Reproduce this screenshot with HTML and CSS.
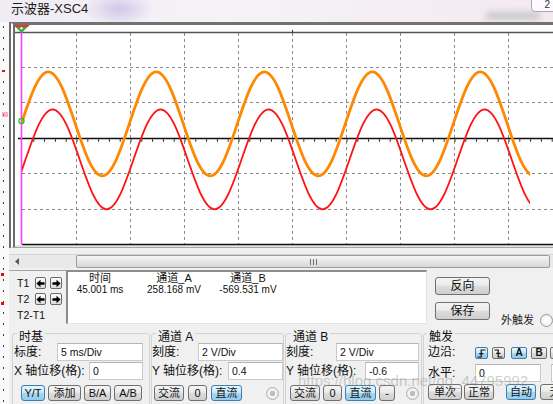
FILE: index.html
```html
<!DOCTYPE html>
<html lang="zh">
<head>
<meta charset="utf-8">
<title>示波器-XSC4</title>
<link rel="stylesheet" href="styles.css">
</head>
<body>
<header class="titlebar">
  <span class="glass"></span>
  <span class="blob"></span>
  <span class="title">示波器-XSC4</span>
  <span class="behind">2</span>
</header>
<div class="main">
  <div class="desk"></div>
  <div class="window">
    <div class="scope">
      <svg class="plot" width="538" height="222" viewBox="15 25 538 222" xmlns="http://www.w3.org/2000/svg">
        <defs><clipPath id="clipw"><rect x="22" y="25" width="508" height="222"/></clipPath></defs>
        <rect x="15" y="25" width="538" height="222" fill="#fff"/>
        <rect x="15" y="245.2" width="538" height="2" fill="#e2e2e2"/>
        <g stroke="#8a8a8a" stroke-width="1" stroke-dasharray="3 3" fill="none">
          <path d="M76.5 33V244M130.5 33V244M184.5 33V244M238.5 33V244M292.5 33V244M346.5 33V244M400.5 33V244M454.5 33V244M508.5 33V244"/>
          <path d="M22 67.5H553M22 102.5H553M22 173.5H553M22 209.5H553"/>
        </g>
        <path d="M15 32.5H553" stroke="#555" stroke-width="1.5"/>
        <path d="M292.5 30V33" stroke="#333" stroke-width="1"/>
        <path d="M22 244.5H553" stroke="#111" stroke-width="1.5"/>
        <path d="M18 138.5H553" stroke="#111" stroke-width="1.3"/>
        <path d="M33.3 140.5H553" stroke="#222" stroke-width="2.5" stroke-dasharray="1 9.8"/>
        <path d="M21.5 26V244.5" stroke="#ff3cff" stroke-width="1.6"/>
        <g clip-path="url(#clipw)" fill="none" stroke-linejoin="round">
          <path stroke="#ff8800" stroke-width="2.8" d="M21.3 123.9
            c8.81,-26.6 17.23,-52 27,-52 c9.77,0 18.19,25.4 27,52 c8.81,26.6 17.23,52 27,52 c9.77,0 18.19,-25.4 27,-52
            c8.81,-26.6 17.23,-52 27,-52 c9.77,0 18.19,25.4 27,52 c8.81,26.6 17.23,52 27,52 c9.77,0 18.19,-25.4 27,-52
            c8.81,-26.6 17.23,-52 27,-52 c9.77,0 18.19,25.4 27,52 c8.81,26.6 17.23,52 27,52 c9.77,0 18.19,-25.4 27,-52
            c8.81,-26.6 17.23,-52 27,-52 c9.77,0 18.19,25.4 27,52 c8.81,26.6 17.23,52 27,52 c9.77,0 18.19,-25.4 27,-52
            c8.81,-26.6 17.23,-52 27,-52 c9.77,0 18.19,25.4 27,52 c8.81,26.6 17.23,52 27,52 c9.77,0 18.19,-25.4 27,-52"/>
          <path stroke="#ff1212" stroke-width="1.8" d="M-1.4 209.3
            c9.77,0 18.19,-24.4 27,-50 c8.81,-25.6 17.23,-50 27,-50 c9.77,0 18.19,24.4 27,50 c8.81,25.6 17.23,50 27,50
            c9.77,0 18.19,-24.4 27,-50 c8.81,-25.6 17.23,-50 27,-50 c9.77,0 18.19,24.4 27,50 c8.81,25.6 17.23,50 27,50
            c9.77,0 18.19,-24.4 27,-50 c8.81,-25.6 17.23,-50 27,-50 c9.77,0 18.19,24.4 27,50 c8.81,25.6 17.23,50 27,50
            c9.77,0 18.19,-24.4 27,-50 c8.81,-25.6 17.23,-50 27,-50 c9.77,0 18.19,24.4 27,50 c8.81,25.6 17.23,50 27,50
            c9.77,0 18.19,-24.4 27,-50 c8.81,-25.6 17.23,-50 27,-50 c9.77,0 18.19,24.4 27,50 c8.81,25.6 17.23,50 27,50"/>
        </g>
        <circle cx="21.5" cy="121" r="2.6" fill="none" stroke="#19c819" stroke-width="1.2"/>
        <polygon points="13.5,25 29.5,25 21.5,33" fill="#22bb22"/>
        <polygon points="13.5,25 29.5,25 27.7,27 15.3,27" fill="#ff2a2a"/>
        <circle cx="21.5" cy="28.3" r="1.6" fill="#fff" stroke="#777" stroke-width=".8"/>
      </svg>
    </div>
    <div class="hscroll">
      <span class="sb-arrow"><svg width="4" height="7" viewBox="0 0 4 7"><path d="M4 0V7L0 3.5Z" fill="#5a5a5a"/></svg></span>
      <span class="sb-track"></span>
      <span class="sb-thumb"><span class="grip"></span></span>
    </div>
    <div class="readout">
      <div class="cursors">
        <div class="crow"><span class="clab">T1</span>
          <span class="abtn"><svg width="9" height="9" viewBox="0 0 10 10"><path d="M0.5 5L5 0.8V3.5H9.5V6.5H5V9.2Z"/></svg></span>
          <span class="abtn"><svg width="9" height="9" viewBox="0 0 10 10"><path d="M9.5 5L5 0.8V3.5H0.5V6.5H5V9.2Z"/></svg></span>
        </div>
        <div class="crow"><span class="clab">T2</span>
          <span class="abtn"><svg width="9" height="9" viewBox="0 0 10 10"><path d="M0.5 5L5 0.8V3.5H9.5V6.5H5V9.2Z"/></svg></span>
          <span class="abtn"><svg width="9" height="9" viewBox="0 0 10 10"><path d="M9.5 5L5 0.8V3.5H0.5V6.5H5V9.2Z"/></svg></span>
        </div>
        <div class="crow diff">T2-T1</div>
      </div>
      <div class="table">
        <div class="th">时间</div><div class="th">通道_A</div><div class="th">通道_B</div>
        <div class="td">45.001 ms</div><div class="td">258.168 mV</div><div class="td">-569.531 mV</div>
      </div>
      <div class="side">
        <button class="btn big">反向</button>
        <button class="btn big">保存</button>
      </div>
      <div class="ext">外触发<span class="radio"></span></div>
    </div>
    <div class="controls">
      <section class="group g1">
        <div class="legend"><span>时基</span></div>
        <div class="row row1"><span class="lab">标度:</span><span class="field w86">5 ms/Div</span></div>
        <div class="row row2"><span class="lab">X 轴位移(格):</span><span class="field w54">0</span></div>
        <div class="brow">
          <button class="btn on w24">Y/T</button>
          <button class="btn w33">添加</button>
          <button class="btn w27">B/A</button>
          <button class="btn w28">A/B</button>
        </div>
      </section>
      <section class="group g2">
        <div class="legend"><span>通道 A</span></div>
        <div class="row row1"><span class="lab">刻度:</span><span class="field w85">2 V/Div</span></div>
        <div class="row row2"><span class="lab">Y 轴位移(格):</span><span class="field w55">0.4</span></div>
        <div class="brow">
          <button class="btn w30">交流</button>
          <button class="btn w19">0</button>
          <button class="btn on w31">直流</button>
          <span class="radio dis"></span>
        </div>
      </section>
      <section class="group g3">
        <div class="legend"><span>通道 B</span></div>
        <div class="row row1"><span class="lab">刻度:</span><span class="field w83">2 V/Div</span></div>
        <div class="row row2"><span class="lab">Y 轴位移(格):</span><span class="field w54">-0.6</span></div>
        <div class="brow">
          <button class="btn w30">交流</button>
          <button class="btn w19">0</button>
          <button class="btn on w31">直流</button>
          <button class="btn w16">-</button>
          <span class="radio dis"></span>
        </div>
      </section>
      <section class="group g4">
        <div class="legend"><span>触发</span></div>
        <div class="row row1"><span class="lab lw">边沿:</span>
          <button class="btn ebtn on w13"><svg width="9" height="9" viewBox="0 0 9 9"><path d="M0.5 8H4.2V1H8.5M2.2 4.6H6.4" fill="none" stroke="#111" stroke-width="1.2"/></svg></button>
          <button class="btn ebtn w13 m4"><svg width="9" height="9" viewBox="0 0 9 9"><path d="M0.5 1H4.2V8H8.5M2.2 4.4H6.4" fill="none" stroke="#111" stroke-width="1.2"/></svg></button>
          <button class="btn ebtn on w16 m6">A</button>
          <button class="btn ebtn w16 m4">B</button>
          <button class="btn ebtn w16 m3">C</button>
        </div>
        <div class="row row2 r4"><span class="lab lw">水平:</span><span class="field w66">0</span><span class="field w40 m10">V</span></div>
        <div class="brow">
          <button class="btn w34">单次</button>
          <button class="btn w30 m2">正常</button>
          <button class="btn on w30 m12">自动</button>
          <button class="btn w30 m4">无</button>
        </div>
      </section>
    </div>
  </div>
</div>
<div class="watermark">https://blog.csdn.net/qq_44795992</div>
</body>
</html>
```
FILE: styles.css
```css
* { box-sizing: border-box; margin: 0; padding: 0; }
html, body { width: 553px; height: 404px; overflow: hidden; }
body {
  position: relative;
  display: flex;
  flex-direction: column;
  background: #f0f0f0;
  font-family: "Liberation Sans", "Noto Sans CJK SC", sans-serif;
  font-size: 12px;
  color: #111;
}

/* title bar */
.titlebar {
  flex: none;
  height: 22px;
  position: relative;
  overflow: hidden;
  padding-left: 11px;
  background: linear-gradient(90deg, #f1ecf4 0%, #f6f2f7 40%, #f4eef4 75%, #f3e9f1 100%);
}
.title { position: relative; z-index: 1; font-size: 13px; line-height: 17px; color: #1c1c1c; }
.glass {
  position: absolute; left: 84px; top: -8px; width: 70px; height: 34px;
  background: radial-gradient(closest-side, rgba(165, 152, 220, 0.45), rgba(165, 152, 220, 0));
}
.blob {
  position: absolute; left: 486px; top: 12px; width: 54px; height: 8px;
  background: rgba(125, 140, 125, 0.35); filter: blur(3px);
}
.behind {
  position: absolute; right: -3px; top: -2px; width: 25px; height: 14px;
  border: 1px solid #a8a8b0; border-radius: 0 0 0 4px; background: #fbfbfd;
  font-size: 10px; line-height: 12px; text-align: right; padding-right: 5px; color: #333;
}

.main { flex: 1; display: flex; min-height: 0; }
.desk {
  flex: none;
  width: 9px;
  background-color: #fafafa;
  background-image:
    linear-gradient(#e01010, #e01010),
    linear-gradient(rgba(240, 120, 140, 0.55), rgba(240, 120, 140, 0.55)),
    linear-gradient(#e01010, #e01010),
    linear-gradient(#e01010, #e01010),
    repeating-linear-gradient(to bottom, #3c3c3c 0 2px, transparent 2px 11px);
  background-size: 3px 2px, 6px 5px, 3px 3px, 3px 3px, 1px 100%;
  background-position: 2px 48px, 2px 90px, 1px 251px, 1px 280px, 3px 4px;
  background-repeat: no-repeat;
}
.window { flex: 1; display: flex; flex-direction: column; min-width: 0; }

/* scope display */
.scope {
  flex: none;
  border-left: 6px double #6c6c6c;
  border-top: 3px solid #727272;
  border-bottom: 1px solid #a6a6a6;
  background: #fff;
}
.plot { display: block; }

/* scrollbar */
.hscroll {
  flex: none; margin-top: 6px; height: 14px; display: flex;
  background: #e9e9e9; border-top: 1px solid #d4d4d4;
}
.sb-arrow { width: 16px; display: flex; align-items: center; justify-content: center; }
.sb-track { width: 51px; }
.sb-thumb {
  width: 474px; border: 1px solid #9c9c9c; border-radius: 2px;
  background: linear-gradient(#f7f7f7, #e6e6e6 50%, #d7d7d7);
  display: flex; align-items: center; justify-content: center;
}
.grip { width: 7px; height: 6px; background: repeating-linear-gradient(90deg, #6e6e6e 0 1px, transparent 1px 3px); }

/* readout row */
.readout { flex: none; height: 56px; display: flex; padding-top: 2px; }
.cursors { width: 57px; border-top: 1px solid #a3a3a3; padding: 6px 0 0 8px; font-size: 10.5px; }
.crow { display: flex; align-items: center; height: 12px; margin-bottom: 4px; line-height: 12px; }
.clab { width: 18px; }
.abtn {
  width: 12px; height: 12px; margin-right: 4px;
  border: 1px solid #6a6a6a; border-radius: 2px;
  background: linear-gradient(#fdfdfd, #dcdcdc);
  display: flex; align-items: center; justify-content: center;
}
.abtn svg { fill: #000; }
.diff { margin-top: 1px; }

.table {
  width: 368px; background: #fff;
  border-top: 2px solid #8d8d8d; border-left: 2px solid #8d8d8d;
  border-bottom: 1px solid #e3e3e3; border-right: 1px solid #e3e3e3;
  display: grid; grid-template-columns: 64px 84px 64px; grid-template-rows: 12px 12px;
  align-content: start; text-align: center;
}
.th { font-size: 11px; line-height: 13px; white-space: nowrap; }
.td { font-size: 10px; line-height: 12px; white-space: nowrap; }

.side { margin-left: 8px; padding-top: 7px; display: flex; flex-direction: column; gap: 7px; }
.ext {
  margin-left: 11px; align-self: flex-end; display: flex; align-items: center;
  font-size: 11px; line-height: 14px; margin-bottom: -3px; color: #222; white-space: nowrap;
}
.radio {
  flex: none; width: 13px; height: 13px; border-radius: 50%;
  border: 1px solid #9a9a9a; background: radial-gradient(#fff 30%, #e0e0e0);
}
.ext .radio { margin-left: 6px; }
.radio.dis {
  margin-left: auto;
  border-color: #b0b0b0;
  background: radial-gradient(circle, #bdbdbd 0 2.5px, #f6f6f6 3px, #e6e6e6 6px);
}

/* buttons */
.btn {
  flex: none; display: flex; align-items: center; justify-content: center;
  height: 16px; border: 1px solid #707070; border-radius: 3px;
  background: linear-gradient(#f4f4f4, #ebebeb 45%, #dddddd 50%, #cfcfcf);
  font: 11px/14px "Liberation Sans", "Noto Sans CJK SC", sans-serif; color: #111;
  padding: 0; white-space: nowrap;
}
.btn.on {
  border-color: #3c7fb1;
  background: linear-gradient(#e6f5fd, #c8e7f8 50%, #a6d7f2 52%, #95cbec);
}
.btn.big { width: 55px; height: 18px; font-size: 12px; }

/* control groups */
.controls { flex: 1; display: flex; padding-left: 3px; align-items: flex-start; }
.group { flex: none; margin-top: 9px; height: 80px; border: 1px solid #d2d2d2; border-radius: 3px; }
.g1 { width: 138px; padding-left: 1px; }
.g2 { width: 133px; margin-left: 1px; }
.g3 { width: 137px; margin-left: 1px; }
.g4 { width: 140px; margin-left: 1px; }
.legend { height: 9px; line-height: 14px; margin-top: -4px; font-size: 12px; white-space: nowrap; }
.legend span { background: #f0f0f0; padding: 0 2px; }
.g1 .legend { padding-left: 3px; }
.g2 .legend { padding-left: 4px; }
.g3 .legend { padding-left: 5px; }
.g4 .legend { padding-left: 3px; }

.row { display: flex; align-items: center; height: 18px; }
.row1 { margin-top: 4px; }
.row2 { margin-top: 1px; }
.r4 { margin-top: 3px; }
.lab { font-size: 12px; white-space: nowrap; line-height: 18px; }
.lw { width: 47px; flex: none; }
.field {
  flex: none; height: 18px; margin-left: auto;
  background: #fff; border: 1px solid #cacaca; border-top-color: #b4b4b4;
  font-size: 10.5px; line-height: 16px; padding-left: 3px; white-space: nowrap; overflow: hidden;
}
.g4 .field { margin-left: 0; }
.g1 .row { padding-right: 6px; }
.g3 .row { padding-right: 2px; }
.g4 .row1 { padding-left: 4px; }
.g4 .row2 { padding-left: 4px; }

.brow { display: flex; align-items: center; height: 16px; margin-top: 5px; }
.g1 .brow { padding-left: 7px; gap: 3px; }
.g2 .brow { padding-left: 2px; padding-right: 4px; gap: 4px; }
.g3 .brow { padding-left: 4px; padding-right: 2px; gap: 3px; }
.g4 .brow { padding-left: 4px; margin-top: 2px; }

.ebtn { height: 12px; margin-top: 2px; font-size: 10px; line-height: 10px; font-weight: bold; border-radius: 2px; }

.w13 { width: 13px; } .w16 { width: 16px; } .w19 { width: 19px; } .w24 { width: 24px; }
.w27 { width: 27px; } .w28 { width: 28px; } .w30 { width: 30px; } .w31 { width: 31px; }
.w33 { width: 33px; } .w34 { width: 34px; } .w40 { width: 40px; } .w54 { width: 54px; }
.w55 { width: 55px; } .w66 { width: 66px; } .w83 { width: 83px; } .w85 { width: 85px; }
.w86 { width: 86px; }
.m2 { margin-left: 2px; } .m3 { margin-left: 3px; } .m4 { margin-left: 4px; }
.m6 { margin-left: 6px; } .m10 { margin-left: 10px; } .m12 { margin-left: 12px; }
.g4 .field.m10 { margin-left: 10px; }

.watermark {
  position: absolute; left: 298px; top: 372px;
  font-size: 15px; line-height: 18px; color: rgba(140, 140, 140, 0.42);
  white-space: nowrap; pointer-events: none;
}
```
